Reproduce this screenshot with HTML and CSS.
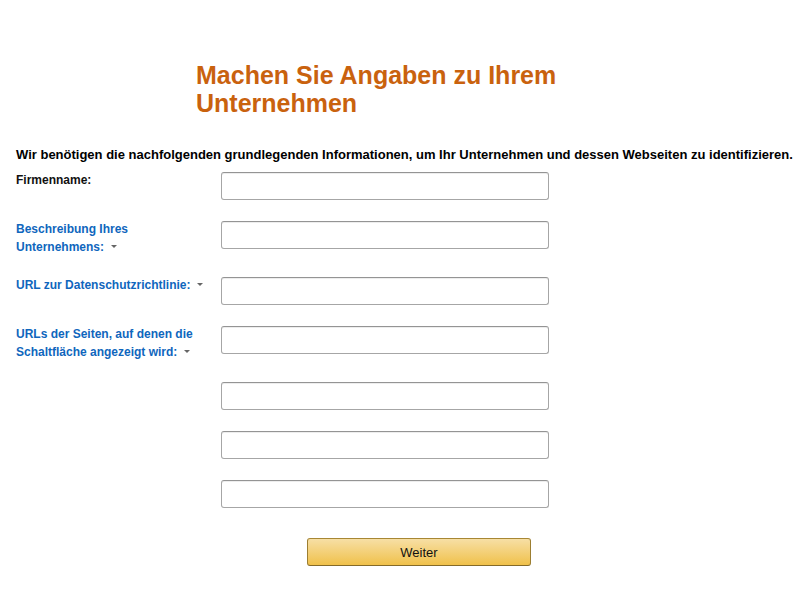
FILE: index.html
```html
<!doctype html>
<html>
    <head>
        <title>Angaben zu Ihrem Unternehmen</title>
        <link rel="stylesheet" href="styles.css">
    </head>
    <body>
        <div class="page">
            <h1 class="title">Machen Sie Angaben zu Ihrem Unternehmen</h1>

            <p class="intro">Wir benötigen die nachfolgenden grundlegenden Informationen, um Ihr Unternehmen und dessen Webseiten zu identifizieren.</p>

            <form class="form">
                <div class="row">
                    <label class="label">Firmenname:</label>
                    <input class="field" type="text" name="firma">
                </div>

                <div class="row">
                    <label class="label link">Beschreibung Ihres Unternehmens:<span class="caret"></span></label>
                    <input class="field" type="text" name="beschreibung">
                </div>

                <div class="row">
                    <label class="label link">URL zur Datenschutzrichtlinie:<span class="caret"></span></label>
                    <input class="field" type="text" name="datenschutz">
                </div>

                <div class="row">
                    <label class="label link">URLs der Seiten, auf denen die Schaltfläche angezeigt wird:<span class="caret"></span></label>
                    <input class="field" type="text" name="url1">
                </div>

                <div class="row">
                    <span class="label"></span>
                    <input class="field" type="text" name="url2">
                </div>

                <div class="row">
                    <span class="label"></span>
                    <input class="field" type="text" name="url3">
                </div>

                <div class="row">
                    <span class="label"></span>
                    <input class="field" type="text" name="url4">
                </div>

                <div class="actions">
                    <button class="button" type="button">Weiter</button>
                </div>
            </form>
        </div>
    </body>
</html>
```

FILE: styles.css
```css
body {
margin: 0;
background-color: #fff;
font-family: "Liberation Sans", Arial, sans-serif;
color: #111;
}

.page {
padding: 0 8px 0 16px;
}

.title {
margin: 61px 0 0 180px;
width: 380px;
font-size: 25px;
line-height: 28px;
font-weight: bold;
color: #c9620e;
}

.intro {
margin: 29px 0 9px 0;
font-size: 13px;
line-height: 17px;
font-weight: bold;
color: #000;
white-space: nowrap;
}

.row {
display: flex;
align-items: flex-start;
margin-bottom: 21px;
}

.label {
width: 205px;
padding-right: 10px;
box-sizing: border-box;
flex-shrink: 0;
font-size: 12px;
line-height: 17.5px;
font-weight: bold;
color: #111;
}

.link {
color: #0f66bd;
}

.caret {
display: inline-block;
margin-left: 7px;
vertical-align: middle;
border-left: 3px solid transparent;
border-right: 3px solid transparent;
border-top: 3px solid #666;
position: relative;
top: -1px;
}

.field {
width: 328px;
height: 28px;
box-sizing: border-box;
margin: 0;
border: 1px solid #a6a6a6;
border-top-color: #949494;
border-radius: 3px;
box-shadow: inset 0 1px 0 rgba(0,0,0,.07);
font-family: "Liberation Sans", Arial, sans-serif;
font-size: 13px;
padding: 3px 7px;
}

.actions {
padding: 9px 0 0 291px;
}

.button {
width: 224px;
height: 28px;
border: 1px solid;
border-color: #a88734 #9c7e31 #846a29;
border-radius: 3px;
background: linear-gradient(to bottom, #f7dfa5, #f0c14b);
font-family: "Liberation Sans", Arial, sans-serif;
font-size: 13px;
color: #111;
cursor: pointer;
}
```
